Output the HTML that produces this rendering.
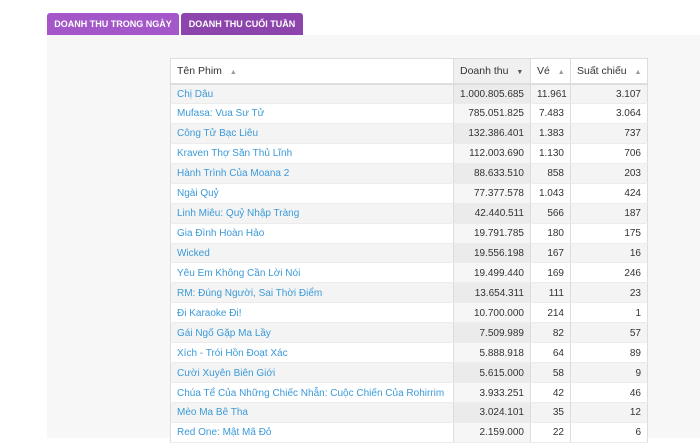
<!DOCTYPE html>
<html><head><meta charset="utf-8"><style>
body{margin:0;width:700px;height:438px;overflow:hidden;background:#fff;font-family:"Liberation Sans",sans-serif;}
.tab{position:absolute;top:13px;height:22px;color:#fff;font-size:9px;font-weight:bold;line-height:22px;text-align:center;border-radius:3px 3px 0 0;white-space:nowrap;}
.area{position:absolute;left:47px;top:35px;right:0;bottom:0;background:#f7f7f7;}
table{position:absolute;left:170px;top:58px;width:477px;border-collapse:collapse;font-size:10px;background:#fff;table-layout:fixed;}
th,td{white-space:nowrap;overflow:hidden;}
th{height:25px;text-align:left;font-weight:normal;color:#333;padding:0 6px;border:1px solid #ddd;border-bottom:2px solid #ddd;font-size:10.5px;box-sizing:border-box;}
th .a{color:#999;font-size:7px;margin-left:5px;}
td{height:19.95px;padding:1px 6px 0;border-left:1px solid #ddd;border-right:1px solid #ddd;border-bottom:1px solid #ececec;color:#333;box-sizing:border-box;}
td.n{text-align:right}
td:first-child{color:#3a9ad9}
tr:nth-child(odd) td{background:#f4f4f4}
tr:nth-child(odd) td.s{background:#ebebeb}
td.s{background:#f6f6f6}
th.s{background:#f0f0f0}
</style></head><body>
<div class="tab" style="left:47px;width:132px;background:#a457c8">DOANH THU TRONG NGÀY</div>
<div class="tab" style="left:181px;width:122px;background:#8e44ad">DOANH THU CUỐI TUẦN</div>
<div class="area"></div>
<table>
<colgroup><col style="width:283px"><col style="width:77px"><col style="width:40px"><col style="width:77px"></colgroup>
<thead><tr><th>Tên Phim <span class="a">▲</span></th><th class="s">Doanh thu <span class="a" style="color:#555">▼</span></th><th>Vé <span class="a">▲</span></th><th>Suất chiếu <span class="a">▲</span></th></tr></thead>
<tbody>
<tr><td>Chị Dâu</td><td class="n s">1.000.805.685</td><td class="n">11.961</td><td class="n">3.107</td></tr>
<tr><td>Mufasa: Vua Sư Tử</td><td class="n s">785.051.825</td><td class="n">7.483</td><td class="n">3.064</td></tr>
<tr><td>Công Tử Bạc Liêu</td><td class="n s">132.386.401</td><td class="n">1.383</td><td class="n">737</td></tr>
<tr><td>Kraven Thợ Săn Thủ Lĩnh</td><td class="n s">112.003.690</td><td class="n">1.130</td><td class="n">706</td></tr>
<tr><td>Hành Trình Của Moana 2</td><td class="n s">88.633.510</td><td class="n">858</td><td class="n">203</td></tr>
<tr><td>Ngài Quỷ</td><td class="n s">77.377.578</td><td class="n">1.043</td><td class="n">424</td></tr>
<tr><td>Linh Miêu: Quỷ Nhập Tràng</td><td class="n s">42.440.511</td><td class="n">566</td><td class="n">187</td></tr>
<tr><td>Gia Đình Hoàn Hảo</td><td class="n s">19.791.785</td><td class="n">180</td><td class="n">175</td></tr>
<tr><td>Wicked</td><td class="n s">19.556.198</td><td class="n">167</td><td class="n">16</td></tr>
<tr><td>Yêu Em Không Cần Lời Nói</td><td class="n s">19.499.440</td><td class="n">169</td><td class="n">246</td></tr>
<tr><td>RM: Đúng Người, Sai Thời Điểm</td><td class="n s">13.654.311</td><td class="n">111</td><td class="n">23</td></tr>
<tr><td>Đi Karaoke Đi!</td><td class="n s">10.700.000</td><td class="n">214</td><td class="n">1</td></tr>
<tr><td>Gái Ngố Gặp Ma Lầy</td><td class="n s">7.509.989</td><td class="n">82</td><td class="n">57</td></tr>
<tr><td>Xích - Trói Hồn Đoạt Xác</td><td class="n s">5.888.918</td><td class="n">64</td><td class="n">89</td></tr>
<tr><td>Cười Xuyên Biên Giới</td><td class="n s">5.615.000</td><td class="n">58</td><td class="n">9</td></tr>
<tr><td>Chúa Tể Của Những Chiếc Nhẫn: Cuộc Chiến Của Rohirrim</td><td class="n s">3.933.251</td><td class="n">42</td><td class="n">46</td></tr>
<tr><td>Mèo Ma Bê Tha</td><td class="n s">3.024.101</td><td class="n">35</td><td class="n">12</td></tr>
<tr><td>Red One: Mật Mã Đỏ</td><td class="n s">2.159.000</td><td class="n">22</td><td class="n">6</td></tr>
</tbody></table>
</body></html>
